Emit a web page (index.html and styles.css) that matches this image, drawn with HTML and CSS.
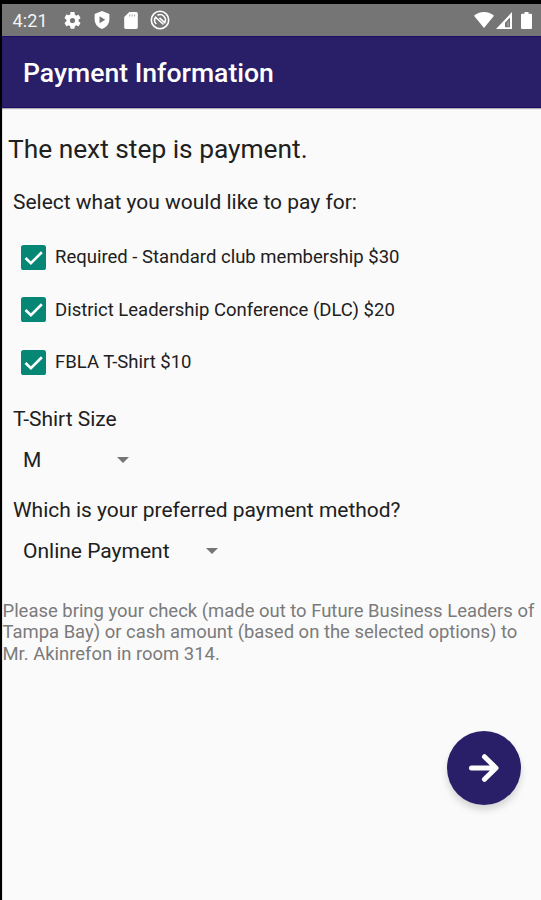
FILE: index.html
```html
<!DOCTYPE html>
<html lang="en">
<head>
    <meta charset="UTF-8">
    <meta name="viewport" content="width=device-width, initial-scale=1.0">
    <title>Payment Information</title>
    <link rel="stylesheet" href="styles.css">
</head>
<body>
    <div class="screen">
        <div class="status-bar">
            <span class="clock">4:21</span>
            <div class="status-left">
                <svg class="icon-gear" viewBox="2 2 20 20"><path fill-rule="evenodd" d="M19.14 12.94c.04-.3.06-.61.06-.94s-.02-.64-.07-.94l2.03-1.58c.18-.14.23-.41.12-.61l-1.92-3.32c-.12-.22-.37-.29-.59-.22l-2.39.96c-.5-.38-1.03-.7-1.62-.94l-.36-2.54A.484.484 0 0 0 13.92 2h-3.84c-.24 0-.43.17-.47.41l-.36 2.54c-.59.24-1.13.57-1.62.94l-2.39-.96c-.22-.08-.47 0-.59.22L2.74 8.87c-.12.21-.08.47.12.61l2.03 1.58c-.05.3-.09.63-.09.94s.02.64.07.94l-2.03 1.58c-.18.14-.23.41-.12.61l1.92 3.32c.12.22.37.29.59.22l2.39-.96c.5.38 1.03.7 1.62.94l.36 2.54c.05.24.24.41.48.41h3.84c.24 0 .44-.17.47-.41l.36-2.54c.59-.24 1.13-.56 1.62-.94l2.39.96c.22.08.47 0 .59-.22l1.92-3.32c.12-.22.07-.47-.12-.61l-2.01-1.58zM12 15a3 3 0 1 1 0-6 3 3 0 0 1 0 6z"/></svg>
                <svg class="icon-shield" viewBox="3 1 18 22"><path fill-rule="evenodd" d="M12 1 3 4.6v6.6c0 5.6 3.8 10.5 9 11.8 5.2-1.3 9-6.2 9-11.8V4.6zM9 7.5v8.6l7-4.3z"/></svg>
                <svg class="icon-sd" viewBox="4 2 16 20"><path d="M18 2h-8L4 8v12a2 2 0 0 0 2 2h12a2 2 0 0 0 2-2V4a2 2 0 0 0-2-2z"/><path class="slots" d="M10.5 5v2.2M13.3 5v2.2M16.2 5v2.2"/></svg>
                <svg class="icon-sync" viewBox="0 0 20 20"><circle cx="10" cy="10" r="8.7"/><path d="M6.3 14A5.400 5.400 0 0 1 5.500 7.200L13.500 14.500M7.500 5.300a5.400 5.400 0 0 1 7.300 7.300L9.500 7.800"/></svg>
            </div>
            <div class="status-right">
                <svg class="icon-wifi" viewBox="0 0 20 16"><path d="M10 16 0 3.8C2.6 1.5 6 0 10 0s7.400 1.500 10 3.800z"/></svg>
                <svg class="icon-signal" viewBox="0 0 16 17"><path fill-rule="evenodd" d="M16 0v17H0zM14 5.5 9 10.8v4.5h5z"/><path d="M11 10.8 13 8.7v5.6h-2z" opacity=".25"/></svg>
                <svg class="icon-battery" viewBox="0 0 11 17"><path d="M3.5 0h4v1.8H10a1 1 0 0 1 1 1V16a1 1 0 0 1-1 1H1a1 1 0 0 1-1-1V2.8a1 1 0 0 1 1-1h2.5z"/></svg>
            </div>
        </div>

        <div class="app-bar">
            <h1>Payment Information</h1>
        </div>

        <div class="content">
            <h2>The next step is payment.</h2>
            <p class="label">Select what you would like to pay for:</p>

            <div class="options">
                <div class="option">
                    <svg class="checkbox" viewBox="0 0 24 24"><rect width="24" height="24" rx="2.5"/><path d="M4.3 12.5 9.5 17.5 20 7"/></svg>
                    <span>Required - Standard club membership $30</span>
                </div>
                <div class="option">
                    <svg class="checkbox" viewBox="0 0 24 24"><rect width="24" height="24" rx="2.5"/><path d="M4.3 12.5 9.5 17.5 20 7"/></svg>
                    <span>District Leadership Conference (DLC) $20</span>
                </div>
                <div class="option">
                    <svg class="checkbox" viewBox="0 0 24 24"><rect width="24" height="24" rx="2.5"/><path d="M4.3 12.5 9.5 17.5 20 7"/></svg>
                    <span>FBLA T-Shirt $10</span>
                </div>
            </div>

            <p class="label">T-Shirt Size</p>
            <div class="spinner size">
                <span>M</span>
                <i class="arrow"></i>
            </div>

            <p class="label method-label">Which is your preferred payment method?</p>
            <div class="spinner method">
                <span>Online Payment</span>
                <i class="arrow"></i>
            </div>

            <p class="note">Please bring your check (made out to Future Business Leaders of<br>Tampa Bay) or cash amount (based on the selected options) to<br>Mr. Akinrefon in room 314.</p>
        </div>

        <button class="fab" aria-label="Next">
            <svg viewBox="0 0 30 28"><path d="M2.5 14h24M15.5 2.7 27 14 15.5 25.3"/></svg>
        </button>
    </div>
</body>
</html>
```
FILE: styles.css
```css
* {
    margin: 0;
    padding: 0;
    box-sizing: border-box;
}

body {
    font-family: Roboto, "Liberation Sans", sans-serif;
    background: #000;
    color: #202020;
    width: 541px;
    height: 900px;
    padding: 4px 0 0 2px;
    overflow: hidden;
}

.screen {
    display: flex;
    flex-direction: column;
    height: 896px;
    background: #fafafa;
    border-left: 1px solid #e4e4e4;
    position: relative;
}

.status-bar {
    display: flex;
    align-items: center;
    height: 32px;
    margin-left: -1px;
    padding: 0 9px 0 10.5px;
    background: #757575;
    color: #f4f4f4;
}

.status-bar svg {
    fill: #fff;
    display: block;
}

.clock {
    width: 51px;
    font-size: 18px;
    letter-spacing: 0.1px;
}

.status-left,
.status-right {
    display: flex;
    align-items: center;
}

.status-right {
    margin-left: auto;
}

.icon-gear {
    width: 17px;
    height: 17px;
}

.icon-shield {
    width: 16px;
    height: 18px;
    margin-left: 13px;
}

.icon-sd {
    width: 14px;
    height: 17px;
    margin-left: 14px;
}

.slots {
    stroke: #b0b0b0;
    stroke-width: 1.4;
}

.status-bar .icon-sync {
    width: 20px;
    height: 20px;
    margin-left: 12px;
    fill: none;
    stroke: #fff;
    stroke-width: 1.6;
}

.icon-wifi {
    width: 20px;
    height: 16px;
}

.icon-signal {
    width: 16px;
    height: 17px;
    margin-left: 2px;
}

.icon-battery {
    width: 11px;
    height: 17px;
    margin-left: 9px;
}

.app-bar {
    display: flex;
    align-items: center;
    height: 72px;
    margin-left: -1px;
    padding: 1px 0 0 21px;
    background: #281f68;
    border-top: 1px solid #1b0c67;
    border-bottom: 1px solid #1b0c67;
    box-shadow: 0 1px 1px rgba(0, 0, 0, 0.3);
}

.app-bar h1 {
    color: #fff;
    font-size: 26.6px;
    font-weight: 500;
}

.content {
    padding-top: 26px;
}

h2 {
    height: 30px;
    margin-left: 5px;
    font-size: 26.3px;
    font-weight: 400;
    line-height: 30px;
}

.label {
    height: 25px;
    margin-left: 10px;
    font-size: 20.97px;
    line-height: 25px;
}

h2 + .label {
    margin-top: 26px;
}

.options {
    padding: 16px 0 18px 18px;
}

.option {
    display: flex;
    align-items: center;
    gap: 9px;
    height: 52.6px;
    font-size: 18.5px;
}

.checkbox {
    width: 25px;
    height: 25px;
    fill: #068776;
}

.checkbox path {
    fill: none;
    stroke: #fff;
    stroke-width: 2.5;
}

.spinner {
    display: flex;
    align-items: center;
    justify-content: space-between;
    height: 32px;
    margin-top: 12px;
    margin-left: 20px;
    font-size: 21px;
}

.size {
    width: 106px;
}

.method {
    width: 195px;
}

.arrow {
    border: 6.5px solid transparent;
    border-top-color: #757575;
    border-bottom: 0;
}

.method-label {
    margin-top: 22px;
}

.note {
    margin-top: 34px;
    margin-left: -0.5px;
    color: #7b7b7b;
    font-size: 18.45px;
    line-height: 21.5px;
    white-space: nowrap;
}

.fab {
    position: absolute;
    right: 20px;
    top: 727px;
    width: 74px;
    height: 74px;
    border: none;
    border-radius: 50%;
    background: #281f68;
    box-shadow: 0 5px 7px rgba(0, 0, 0, 0.15);
    display: flex;
    align-items: center;
    justify-content: center;
}

.fab svg {
    width: 30px;
    height: 28px;
    fill: none;
    stroke: #fff;
    stroke-width: 5;
    stroke-linejoin: round;
    stroke-linecap: round;
}
```
